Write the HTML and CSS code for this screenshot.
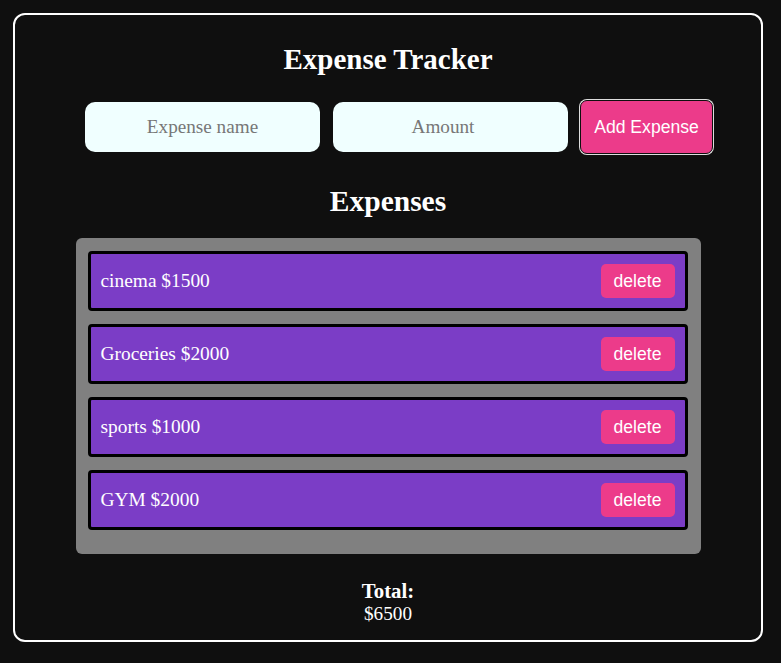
FILE: index.html
```html
<!DOCTYPE html>
<html>
<head>
<meta charset="utf-8">
<link rel="stylesheet" href="styles.css">
</head>
<body>
<div class="app">
  <h1 class="title">Expense Tracker</h1>
  <div class="form">
    <input class="field" type="text" placeholder="Expense name">
    <input class="field" type="number" placeholder="Amount">
    <button class="add-btn">Add Expense</button>
  </div>
  <h2 class="subtitle">Expenses</h2>
  <ul class="list">
    <li class="item"><span class="item-text">cinema $1500</span><button class="del-btn">delete</button></li>
    <li class="item"><span class="item-text">Groceries $2000</span><button class="del-btn">delete</button></li>
    <li class="item"><span class="item-text">sports $1000</span><button class="del-btn">delete</button></li>
    <li class="item"><span class="item-text">GYM $2000</span><button class="del-btn">delete</button></li>
  </ul>
  <div class="total">
    <div class="total-label">Total:</div>
    <div class="total-value">$6500</div>
  </div>
</div>
</body>
</html>
```

FILE: styles.css
```css
html, body {
  margin: 0;
  padding: 0;
  background: #0f0f0f;
}
body {
  padding: 13px 18px 0 13px;
  font-family: "Liberation Serif", "Times New Roman", serif;
  color: #fff;
}
.app {
  border: 2px solid #fff;
  border-radius: 12px;
  padding: 28px 0 15px;
  display: flex;
  flex-direction: column;
  align-items: center;
}
.title {
  margin: 0 0 25px;
  font-size: 29px;
  line-height: 32px;
  font-weight: bold;
}
.form {
  display: flex;
  align-items: center;
  padding-left: 22px;
}
.field {
  width: 235px;
  height: 50px;
  box-sizing: border-box;
  border: none;
  border-radius: 10px;
  background: #f0ffff;
  font-family: "Liberation Serif", serif;
  font-size: 19.2px;
  text-align: center;
  color: #222;
  margin-right: 13px;
  outline: none;
}
.field::placeholder {
  color: #777;
}
.field + .field {
  margin-right: 12px;
}
.add-btn {
  width: 133px;
  height: 54px;
  box-sizing: border-box;
  border: 1px solid #0f0f0f;
  box-shadow: 0 0 0 1px #ddd;
  border-radius: 7px;
  background: #ec3b8a;
  color: #fff;
  font-family: "Liberation Sans", Arial, sans-serif;
  font-size: 17.6px;
  padding: 0;
}
.subtitle {
  margin: 31px 0 21px;
  font-size: 29.5px;
  line-height: 32px;
  font-weight: bold;
}
.list {
  list-style: none;
  margin: 0;
  width: 625px;
  box-sizing: border-box;
  padding: 13px 13px 24px 12px;
  background: #808080;
  border-radius: 6px;
  display: flex;
  flex-direction: column;
  gap: 13px;
}
.item {
  height: 60px;
  box-sizing: border-box;
  border: 3px solid #000;
  border-radius: 4px;
  background: #7b3dc6;
  display: flex;
  align-items: center;
  justify-content: space-between;
  padding: 0 10px;
}
.item-text {
  font-size: 19.4px;
  color: #fff;
}
.del-btn {
  width: 74px;
  height: 34px;
  border: none;
  border-radius: 5px;
  background: #ec3b8a;
  color: #fff;
  font-family: "Liberation Sans", Arial, sans-serif;
  font-size: 17.6px;
  padding: 0;
}
.total {
  margin-top: 25px;
  text-align: center;
}
.total-label {
  font-size: 20.8px;
  font-weight: bold;
  line-height: 24px;
}
.total-value {
  font-size: 19.2px;
  line-height: 22px;
}
```
